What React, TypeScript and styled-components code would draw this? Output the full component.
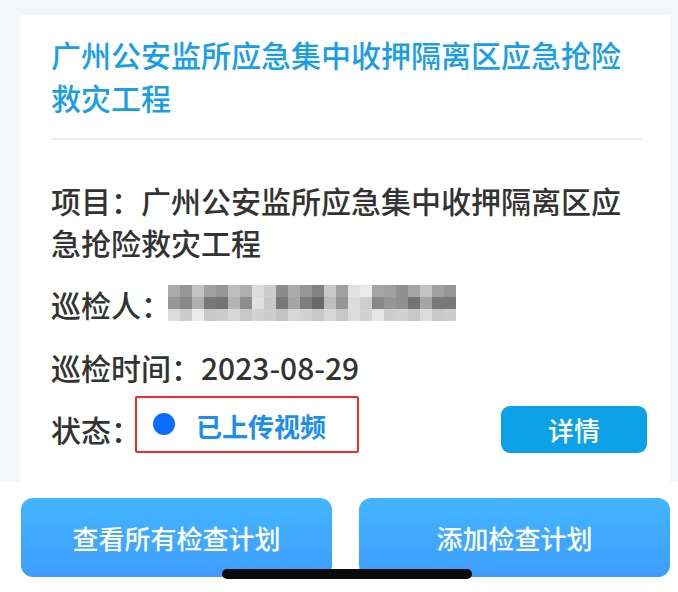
import React from "react";
import styled, { createGlobalStyle } from "styled-components";

const Global = createGlobalStyle`
  html, body { margin: 0; padding: 0; }
  body {
    background: #f5f6f8;
    font-family: "Noto Sans CJK SC", "Noto Sans", sans-serif;
    width: 678px;
    height: 592px;
    overflow: hidden;
  }
`;

const Page = styled.div`
  width: 678px;
  height: 592px;
  display: flex;
  flex-direction: column;
  background: #f5f6f8;
`;

const Card = styled.div`
  margin: 15px 8px 0 21px;
  height: 467px;
  background: #ffffff;
  padding: 18px 28px 0 30px;
  box-sizing: border-box;
  display: flex;
  flex-direction: column;
`;

const Title = styled.div`
  font-size: 30px;
  line-height: 43px;
  font-weight: 500;
  color: #1a9fe6;
`;

const Divider = styled.div`
  height: 2px;
  background: #efefef;
  margin: 19px 0 39px;
`;

const Row = styled.div<{ $gap?: number }>`
  font-size: 30px;
  line-height: 42px;
  font-weight: 500;
  color: #333333;
  margin-bottom: ${(p) => p.$gap ?? 20}px;
  display: flex;
  align-items: center;
`;

const Mosaic = styled.div`
  display: grid;
  grid-template-columns: repeat(24, 12px);
  grid-auto-rows: 12px;
  margin-left: -3px;
  margin-top: -2px;
`;

const Cell = styled.div<{ $shade: number }>`
  background: ${(p) => `rgb(${p.$shade},${p.$shade},${p.$shade})`};
`;

const StatusRow = styled.div`
  display: flex;
  align-items: center;
  font-size: 30px;
  line-height: 42px;
  font-weight: 500;
  color: #333333;
`;

const StatusLabel = styled.span`
  margin-top: 8px;
`;

const StatusBox = styled.div`
  margin-left: -6px;
  margin-top: -1px;
  width: 224px;
  height: 57px;
  box-sizing: border-box;
  border: 2px solid #f12a2a;
  border-radius: 2px;
  display: flex;
  align-items: center;
  padding-left: 16px;
`;

const Dot = styled.span`
  width: 22px;
  height: 22px;
  border-radius: 50%;
  background: #0a6bff;
  flex: none;
`;

const StatusText = styled.span`
  margin-left: 21px;
  font-size: 26px;
  font-weight: 700;
  color: #1a8fee;
  margin-top: 4px;
`;

const DetailButton = styled.button`
  margin-left: auto;
  margin-right: -5px;
  margin-top: 10px;
  width: 146px;
  height: 47px;
  border: none;
  border-radius: 9px;
  background: #0ca1e7;
  color: #ffffff;
  font-family: "Noto Sans CJK SC", sans-serif;
  font-size: 26px;
  font-weight: 500;
  padding: 0;
`;

const BottomBar = styled.div`
  flex: 1;
  background: #ffffff;
  position: relative;
  display: grid;
  grid-template-columns: 311px 311px;
  column-gap: 27px;
  padding: 16px 8px 15px 21px;
  box-sizing: border-box;
`;

const ActionButton = styled.button`
  height: 79px;
  border: none;
  border-radius: 12px;
  background: linear-gradient(180deg, #42b6ff 0%, #3f9cff 100%);
  color: #ffffff;
  font-family: "Noto Sans CJK SC", sans-serif;
  font-size: 26px;
  font-weight: 500;
  padding: 0;
`;

const HomeIndicator = styled.div`
  position: absolute;
  left: 222px;
  top: 87px;
  width: 250px;
  height: 10px;
  border-radius: 5px;
  background: #0a0a0a;
`;

const mosaicRows = [
  [170, 150, 195, 160, 150, 190, 175, 220, 205, 140, 170, 150, 130, 200, 160, 225, 235, 165, 160, 145, 165, 195, 160, 150],
  [150, 135, 175, 120, 115, 180, 140, 225, 200, 120, 165, 125, 105, 190, 150, 220, 205, 135, 150, 145, 115, 165, 120, 120],
  [220, 205, 235, 200, 205, 215, 200, 210, 205, 195, 215, 210, 200, 215, 200, 220, 210, 230, 205, 210, 200, 220, 200, 205],
];

export default function App() {
  return (
    <>
      <Global />
      <Page>
        <Card>
          <Title>广州公安监所应急集中收押隔离区应急抢险救灾工程</Title>
          <Divider />
          <Row>项目：广州公安监所应急集中收押隔离区应急抢险救灾工程</Row>
          <Row $gap={21}>
            巡检人：
            <Mosaic>
              {mosaicRows.flatMap((r, ri) =>
                r.map((s, ci) => <Cell key={`${ri}-${ci}`} $shade={s} />)
              )}
            </Mosaic>
          </Row>
          <Row $gap={8}>巡检时间：2023-08-29</Row>
          <StatusRow>
            <StatusLabel>状态：</StatusLabel>
            <StatusBox>
              <Dot />
              <StatusText>已上传视频</StatusText>
            </StatusBox>
            <DetailButton>详情</DetailButton>
          </StatusRow>
        </Card>
        <BottomBar>
          <ActionButton>查看所有检查计划</ActionButton>
          <ActionButton>添加检查计划</ActionButton>
          <HomeIndicator />
        </BottomBar>
      </Page>
    </>
  );
}
